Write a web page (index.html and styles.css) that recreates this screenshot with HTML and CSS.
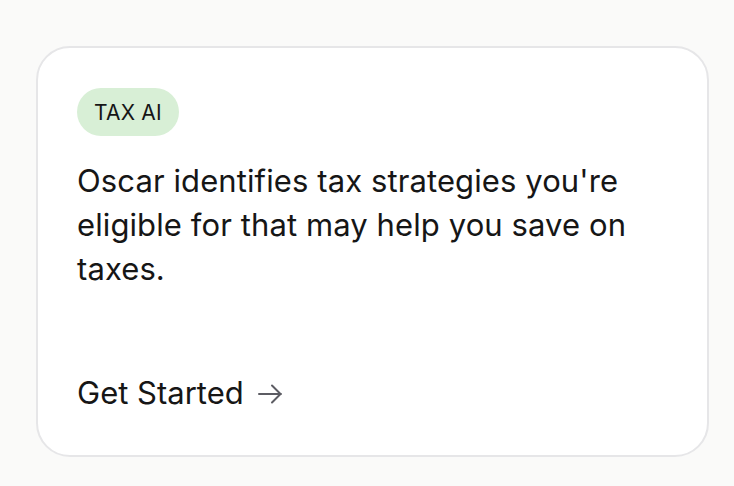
FILE: index.html
```html
<!DOCTYPE html>
<html lang="en">
<head>
<meta charset="utf-8">
<link rel="stylesheet" href="styles.css">
</head>
<body>
<main class="page">
  <section class="card">
    <span class="badge">TAX AI</span>
    <p class="desc">Oscar identifies tax strategies you're eligible for that may help you save on taxes.</p>
    <a class="cta" href="#">Get Started <span class="arrow"><svg width="26" height="20" viewBox="0 0 26 20" fill="none" stroke="currentColor" stroke-width="2" stroke-linecap="round" stroke-linejoin="round"><path d="M2 10h22M15 1.5l8.5 8.5-8.5 8.5"/></svg></span></a>
  </section>
</main>
</body>
</html>
```
FILE: styles.css
```css
* { box-sizing: border-box; }
html, body { margin: 0; background: #fafaf9; }
body { font-family: Inter, "Noto Sans", sans-serif; color: #161616; }
.page { padding: 46px 25px 0 36px; }
.card {
  width: 673px;
  height: 411px;
  background: #fff;
  border: 2px solid #e6e6e8;
  border-radius: 34px;
  padding: 40px 39px;
  display: flex;
  flex-direction: column;
  align-items: flex-start;
}
.badge {
  display: inline-flex;
  align-items: center;
  height: 48px;
  padding: 0 17px;
  border-radius: 24px;
  background: #d8efd6;
  font-size: 21px;
  letter-spacing: 0.2px;
  color: #161616;
}
.desc {
  margin: 23px 0 0;
  font-size: 31px;
  line-height: 44px;
  letter-spacing: 0.1px;
  max-width: 590px;
}
.cta {
  margin-top: auto;
  font-size: 31px;
  line-height: 44px;
  color: #161616;
  text-decoration: none;
  display: inline-flex;
  align-items: center;
  gap: 13px;
}
.arrow { color: #5c5c63; display: inline-flex; margin-top: 2px; }
```
